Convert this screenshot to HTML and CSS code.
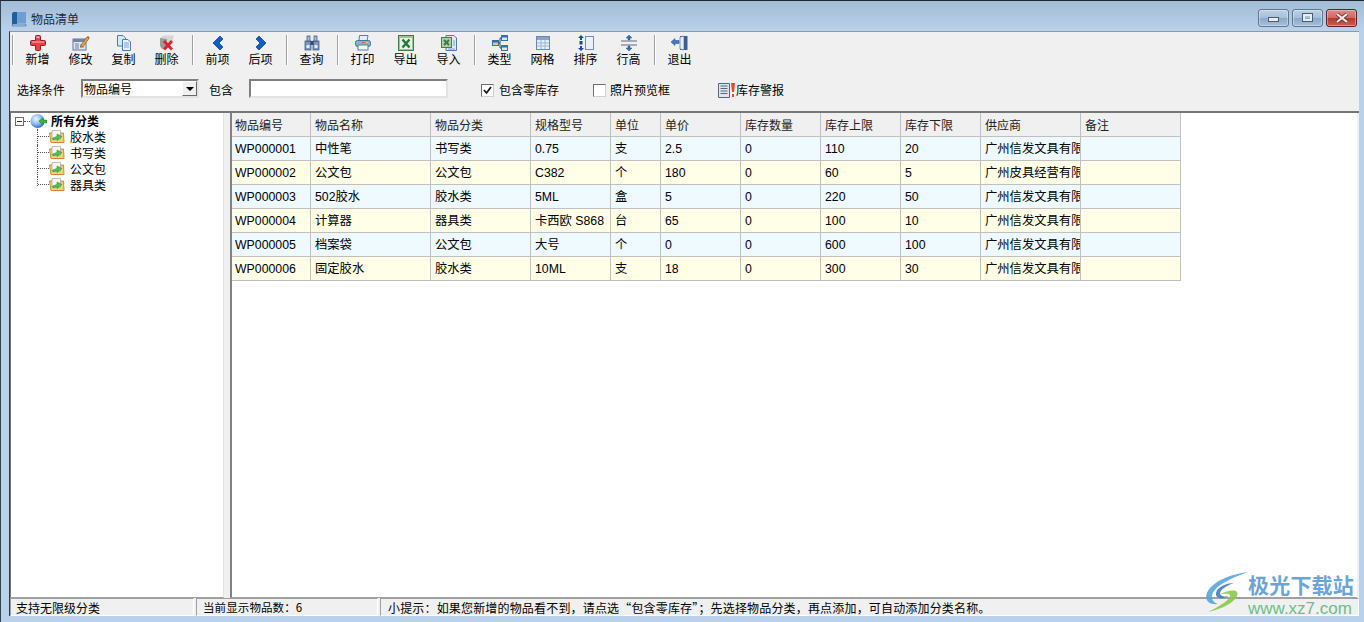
FILE: index.html
```html
<!DOCTYPE html>
<html lang="zh">
<head>
<meta charset="utf-8">
<title>物品清单</title>
<link rel="stylesheet" href="styles.css">
</head>
<body>
<div class="window">
  <header class="titlebar">
    <svg class="title-icon" width="16" height="16" viewBox="0 0 16 16"><path d="M1 3 Q1 1 3 1 H6 V13 H3 Q1 13 1 15 Z" fill="#1c5fa8"/><path d="M6 1 H15 V12 H6 Z" fill="#6f9fd0"/><path d="M1 15 Q1 13 3 13 H15 V15 H3Z" fill="#a9c4e0" stroke="#2b5e96" stroke-width=".5"/></svg>
    <span class="title-text">物品清单</span>
    <div class="win-buttons">
      <div class="win-btn"><span class="glyph-min"></span></div>
      <div class="win-btn"><span class="glyph-max"></span></div>
      <div class="win-btn win-close"><svg width="14" height="10" viewBox="0 0 14 10"><path d="M2 1 L12 9 M12 1 L2 9" stroke="#6e2a26" stroke-width="3.6"/><path d="M2 1 L12 9 M12 1 L2 9" stroke="#eeeeee" stroke-width="2.2"/></svg></div>
    </div>
  </header>

  <div class="client">
    <nav class="toolbar">
      <i class="sep"></i>
      <button class="tool"><svg width="16" height="16" viewBox="0 0 16 16"><path d="M5.5 1.5 Q5.5 .5 6.5 .5 H9.5 Q10.5 .5 10.5 1.5 V5.5 H14.5 Q15.5 5.5 15.5 6.5 V9.5 Q15.5 10.5 14.5 10.5 H10.5 V14.5 Q10.5 15.5 9.5 15.5 H6.5 Q5.5 15.5 5.5 14.5 V10.5 H1.5 Q.5 10.5 .5 9.5 V6.5 Q.5 5.5 1.5 5.5 H5.5 Z" fill="#e8414a" stroke="#8f2228"/><path d="M6.5 1.5 H9.5 V3 H6.5 Z M2 6.5 H14 V7.5 H2Z" fill="#f9b6b6"/></svg><span>新增</span></button>
      <button class="tool"><svg width="18" height="16" viewBox="0 0 18 16"><rect x="1" y="4" width="13" height="11" fill="#dfe8f2" stroke="#64748c"/><rect x="1" y="4" width="13" height="3" fill="#6d87ab"/><path d="M3 9 H7 M3 11 H7 M3 13 H7" stroke="#6b7c94"/><rect x="8" y="9" width="4" height="4" fill="#a5b9d1"/><path d="M9 10 L15 2 L17 3.5 L11 11.5 L8.5 12 Z" fill="#e9a53a" stroke="#7b5a22" stroke-width=".7"/><path d="M15 2 L17 3.5 L17.6 2.5 L16 1Z" fill="#c7413a"/></svg><span>修改</span></button>
      <button class="tool"><svg width="16" height="16" viewBox="0 0 16 16"><path d="M1.5 .5 H7 L9.5 3 V11 H1.5 Z" fill="#d9e6f6" stroke="#4f78ae"/><path d="M6.5 4.5 H12 L14.5 7 V15.5 H6.5 Z" fill="#eef4fc" stroke="#4f78ae"/><path d="M8 8 H13 M8 10 H13 M8 12 H13" stroke="#7da0cc"/></svg><span>复制</span></button>
      <button class="tool"><svg width="16" height="16" viewBox="0 0 16 16"><path d="M2 2 L5 .5 H15 L13 9 H3 Z" fill="#d6d6d6"/><path d="M1 3 V11 L3 14 H8 V4 Z" fill="#9b9b9b"/><path d="M5 6 L13 14.5 M13 6 L5 14.5" stroke="#d8232a" stroke-width="2.8"/></svg><span>删除</span></button>
      <i class="sep"></i>
      <button class="tool"><svg width="12" height="16" viewBox="0 0 12 16"><path d="M1 8 L8 1 L11 4 L7 8 L11 12 L8 15 Z" fill="#0b5fcb" stroke="#07397c" stroke-width=".7"/></svg><span>前项</span></button>
      <button class="tool"><svg width="12" height="16" viewBox="0 0 12 16"><path d="M11 8 L4 1 L1 4 L5 8 L1 12 L4 15 Z" fill="#0b5fcb" stroke="#07397c" stroke-width=".7"/></svg><span>后项</span></button>
      <i class="sep"></i>
      <button class="tool"><svg width="16" height="16" viewBox="0 0 16 16"><rect x="1" y="6" width="6" height="9" fill="#7b98c4" stroke="#2f4a75" stroke-width=".7"/><rect x="9" y="6" width="6" height="9" fill="#7b98c4" stroke="#2f4a75" stroke-width=".7"/><rect x="3" y="1" width="3" height="5" fill="#a5bcdc" stroke="#2f4a75" stroke-width=".7"/><rect x="10" y="1" width="3" height="5" fill="#a5bcdc" stroke="#2f4a75" stroke-width=".7"/><rect x="6.5" y="6" width="3" height="4" fill="#2f4a75"/><path d="M2.5 10 H5.5 V13 H2.5Z M10.5 10 H13.5 V13 H10.5Z" fill="#e2ebf6"/></svg><span>查询</span></button>
      <i class="sep"></i>
      <button class="tool"><svg width="16" height="16" viewBox="0 0 16 16"><path d="M4.5 .5 H13 L12 6 H4 Z" fill="#e9eef5" stroke="#5d7b9f"/><rect x=".5" y="5.5" width="15" height="6" rx="2" fill="#8fb0d2" stroke="#4d6f98"/><rect x="3" y="10" width="10" height="5" fill="#f2f5f9" stroke="#5d7b9f"/><rect x="7" y="7" width="3" height="1" fill="#e25050"/><rect x="11" y="7" width="2" height="1" fill="#e8c040"/></svg><span>打印</span></button>
      <button class="tool"><svg width="16" height="16" viewBox="0 0 16 16"><rect x=".5" y=".5" width="15" height="15" fill="#9fc49a" stroke="#3f7a42"/><rect x="2" y="3" width="12" height="11" fill="#e9f3e2"/><path d="M4.5 4.5 L11.5 12.5 M11.5 4.5 L4.5 12.5" stroke="#1f7a3a" stroke-width="2.4"/></svg><span>导出</span></button>
      <button class="tool"><svg width="16" height="16" viewBox="0 0 16 16"><path d="M5 .5 H13 L15.5 3 V15.5 H5 Z" fill="#dfe9f6" stroke="#4f78ae"/><rect x=".5" y="2.5" width="10" height="10" fill="#b7c9ab" stroke="#4a7a4a"/><path d="M3 5 L8 10 M8 5 L3 10" stroke="#2e7d3e" stroke-width="1.8"/><path d="M12 6 H14 M12 8 H14 M12 10 H14 M7 14 H14" stroke="#7da0cc"/></svg><span>导入</span></button>
      <i class="sep"></i>
      <button class="tool"><svg width="16" height="16" viewBox="0 0 16 16"><rect x="9.5" y=".5" width="6" height="5" fill="#dbe8f8" stroke="#3f6ea8"/><rect x=".5" y="5.5" width="6" height="5" fill="#e8c67a" stroke="#3f6ea8"/><rect x="9.5" y="10.5" width="6" height="5" fill="#dbe8f8" stroke="#3f6ea8"/><path d="M6.5 8 H8 V3 H9.5 M8 8 V13 H9.5" fill="none" stroke="#1b4f91"/><rect x=".5" y="5.5" width="6" height="2" fill="#2f6cc0"/><rect x="9.5" y=".5" width="6" height="2" fill="#2f6cc0"/><rect x="9.5" y="10.5" width="6" height="2" fill="#2f6cc0"/></svg><span>类型</span></button>
      <button class="tool"><svg width="14" height="14" viewBox="0 0 14 14"><rect x=".5" y=".5" width="13" height="13" fill="#e7eef8" stroke="#6b86ad"/><rect x="1" y="1" width="12" height="3" fill="#8aa3c8"/><path d="M1 7 H13 M1 10 H13 M5 4 V13 M9 4 V13" stroke="#9db4d4"/></svg><span>网格</span></button>
      <button class="tool"><svg width="16" height="16" viewBox="0 0 16 16"><rect x="7.5" y="1.5" width="8" height="13" fill="#eaf1fb" stroke="#6b8ebc"/><path d="M3 0 L6 3 L4 3 V5 H2 V3 L0 3 Z M2 11 H4 V13 H6 L3 16 L0 13 H2 Z" fill="#0e4f9f"/><rect x="1.5" y="6" width="3" height="3.5" fill="#0e4f9f"/></svg><span>排序</span></button>
      <button class="tool"><svg width="18" height="16" viewBox="0 0 18 16"><path d="M1 6 H17 M1 10 H17" stroke="#5d6b80" stroke-width="1.2"/><path d="M9 0 L12 3 H10 V5 H8 V3 H6 Z M8 11 H10 V13 H12 L9 16 L6 13 H8 Z" fill="#2f6fbf" stroke="#1a4480" stroke-width=".4"/></svg><span>行高</span></button>
      <i class="sep"></i>
      <button class="tool"><svg width="17" height="16" viewBox="0 0 17 16"><path d="M9 1 H16.5 V15 H9 Z" fill="#3c5f8f"/><path d="M9 2 L13 1 V15 L9 14 Z" fill="#e6eef8" stroke="#3c5f8f" stroke-width=".6"/><path d="M0 7 L4 3.5 V5.5 H8 V8.5 H4 V10.5 Z" fill="#3d7cc7" stroke="#234a80" stroke-width=".5"/></svg><span>退出</span></button>
    </nav>

    <form class="filters">
      <label class="f-label">选择条件</label>
      <div class="select"><span>物品编号</span><b class="select-btn"><i></i></b></div>
      <label class="f-label f-contains">包含</label>
      <div class="text-input"></div>
      <label class="check check-a"><span class="box"><svg width="11" height="11" viewBox="0 0 11 11"><path d="M2 5 L4.5 8 L9 2" fill="none" stroke="#111" stroke-width="1.7"/></svg></span>包含零库存</label>
      <label class="check check-b"><span class="box"></span>照片预览框</label>
      <a class="alarm"><svg width="18" height="16" viewBox="0 0 18 16"><path d="M.5 1.5 H11.5 V15.5 H.5 Z" fill="#dfe6f0" stroke="#56657c"/><path d="M2.5 4 H9.5 M2.5 6.5 H9.5 M2.5 9 H9.5 M2.5 11.5 H9.5" stroke="#56657c"/><path d="M13 1 H17 L16 10 H14 Z" fill="#e8472a"/><rect x="14" y="12" width="2" height="3" fill="#e8472a"/></svg>库存警报</a>
    </form>

    <main class="panes">
      <aside class="tree">
        <div class="tree-root">
          <span class="expander"></span><i class="dots-h"></i>
          <svg class="globe" width="17" height="16" viewBox="0 0 17 16"><defs><radialGradient id="g" cx=".4" cy=".35" r=".7"><stop offset="0" stop-color="#f2f8ff"/><stop offset=".6" stop-color="#7db2ec"/><stop offset="1" stop-color="#1f5fb8"/></radialGradient></defs><circle cx="7.5" cy="8" r="7" fill="url(#g)"/><path d="M9 8 L13 5 V7 H17 V10 H13 V12 Z" fill="#3fae3c" stroke="#1f7a22" stroke-width=".5"/></svg>
          <strong>所有分类</strong>
        </div>
        <ul class="tree-list">
          <li><i class="conn"><i></i></i><svg width="16" height="14" viewBox="0 0 16 14"><path d="M.5 3 H14.5 L15 12.5 H2 Z" fill="#f2cf7e" stroke="#c98f2b"/><path d="M3 .5 H11.5 V9 H3 Z" fill="#f6f6f6" stroke="#9a9a9a" stroke-width=".6"/><path d="M3.5 8 L8 6.5 V4 L13 6.5 L8 10.5 V8.5 L4 10 Z" fill="#5cc04a" stroke="#2b7f24" stroke-width=".5"/></svg><span>胶水类</span></li>
          <li><i class="conn"><i></i></i><svg width="16" height="14" viewBox="0 0 16 14"><path d="M.5 3 H14.5 L15 12.5 H2 Z" fill="#f2cf7e" stroke="#c98f2b"/><path d="M3 .5 H11.5 V9 H3 Z" fill="#f6f6f6" stroke="#9a9a9a" stroke-width=".6"/><path d="M3.5 8 L8 6.5 V4 L13 6.5 L8 10.5 V8.5 L4 10 Z" fill="#5cc04a" stroke="#2b7f24" stroke-width=".5"/></svg><span>书写类</span></li>
          <li><i class="conn"><i></i></i><svg width="16" height="14" viewBox="0 0 16 14"><path d="M.5 3 H14.5 L15 12.5 H2 Z" fill="#f2cf7e" stroke="#c98f2b"/><path d="M3 .5 H11.5 V9 H3 Z" fill="#f6f6f6" stroke="#9a9a9a" stroke-width=".6"/><path d="M3.5 8 L8 6.5 V4 L13 6.5 L8 10.5 V8.5 L4 10 Z" fill="#5cc04a" stroke="#2b7f24" stroke-width=".5"/></svg><span>公文包</span></li>
          <li class="last"><i class="conn"><i></i></i><svg width="16" height="14" viewBox="0 0 16 14"><path d="M.5 3 H14.5 L15 12.5 H2 Z" fill="#f2cf7e" stroke="#c98f2b"/><path d="M3 .5 H11.5 V9 H3 Z" fill="#f6f6f6" stroke="#9a9a9a" stroke-width=".6"/><path d="M3.5 8 L8 6.5 V4 L13 6.5 L8 10.5 V8.5 L4 10 Z" fill="#5cc04a" stroke="#2b7f24" stroke-width=".5"/></svg><span>器具类</span></li>
        </ul>
      </aside>
      <section class="grid">
        <table>
          <colgroup><col class="c79"><col class="c120"><col class="c100"><col class="c80"><col class="c50"><col class="c80"><col class="c80"><col class="c80"><col class="c80"><col class="c100"><col class="c100"></colgroup>
          <thead><tr><th>物品编号</th><th>物品名称</th><th>物品分类</th><th>规格型号</th><th>单位</th><th>单价</th><th>库存数量</th><th>库存上限</th><th>库存下限</th><th>供应商</th><th>备注</th></tr></thead>
          <tbody>
            <tr><td>WP000001</td><td>中性笔</td><td>书写类</td><td>0.75</td><td>支</td><td>2.5</td><td>0</td><td>110</td><td>20</td><td>广州信发文具有限公司</td><td></td></tr>
            <tr><td>WP000002</td><td>公文包</td><td>公文包</td><td>C382</td><td>个</td><td>180</td><td>0</td><td>60</td><td>5</td><td>广州皮具经营有限公司</td><td></td></tr>
            <tr><td>WP000003</td><td>502胶水</td><td>胶水类</td><td>5ML</td><td>盒</td><td>5</td><td>0</td><td>220</td><td>50</td><td>广州信发文具有限公司</td><td></td></tr>
            <tr><td>WP000004</td><td>计算器</td><td>器具类</td><td>卡西欧 S868</td><td>台</td><td>65</td><td>0</td><td>100</td><td>10</td><td>广州信发文具有限公司</td><td></td></tr>
            <tr><td>WP000005</td><td>档案袋</td><td>公文包</td><td>大号</td><td>个</td><td>0</td><td>0</td><td>600</td><td>100</td><td>广州信发文具有限公司</td><td></td></tr>
            <tr><td>WP000006</td><td>固定胶水</td><td>胶水类</td><td>10ML</td><td>支</td><td>18</td><td>0</td><td>300</td><td>30</td><td>广州信发文具有限公司</td><td></td></tr>
          </tbody>
        </table>
      </section>
    </main>

    <footer class="status">
      <div class="panel p1">支持无限级分类</div>
      <div class="panel p2">当前显示物品数：6</div>
      <div class="panel p3">小提示：如果您新增的物品看不到，请点选“包含零库存”；先选择物品分类，再点添加，可自动添加分类名称。</div>
    </footer>
  </div>

  <div class="watermark">
    <svg width="46" height="42" viewBox="0 0 46 42"><path d="M44 1 C28 3 8 10 3 22 C0 30 6 34 14 33 C8 31 6 26 10 20 C16 12 30 6 44 1Z" fill="#5aa5dc"/><path d="M30 12 C20 12 11 18 12 24 C13 28 20 28 24 25 C20 26 16 25 16 22 C17 18 24 14 30 12Z" fill="#3f7fc0"/><path d="M14 24 C22 20 30 18 33 21 C36 26 26 36 4 41 C18 34 27 28 26 24 C24 22 18 23 14 24Z" fill="#8cc84b"/></svg>
    <div class="wm-text"><b>极光下载站</b><span>www.xz7.com</span></div>
  </div>
</div>
</body>
</html>
```

FILE: styles.css
```css
* { box-sizing: border-box; }
html, body { margin: 0; height: 100%; overflow: hidden; }
body {
  font: 12px/16px "Noto Sans CJK SC", "Liberation Sans", sans-serif;
  color: #000;
  background: #b9d1ea;
}
.window {
  height: 622px;
  display: flex;
  flex-direction: column;
  padding: 0 5px 6px 8px;
  border-top: 1px solid #1e2630;
  border-left: 1px solid #39434f;
  background: #b9d1ea;
  position: relative;
}
.titlebar {
  height: 30px;
  margin: 0 -5px 0 -8px;
  padding: 6px 7px 0 10px;
  display: flex;
  align-items: center;
  background: linear-gradient(#a3bcd7, #b9d1ea);
}
.title-icon { margin-right: 4px; }
.title-text { color: #1d2a38; }
.win-buttons { margin: -3px 0 0 auto; display: flex; gap: 3px; }
.win-btn {
  width: 31px;
  height: 18px;
  border: 1px solid #5f7690;
  border-radius: 3px;
  display: flex;
  align-items: center;
  justify-content: center;
  background: linear-gradient(#bcd0e6 0, #a6bfd9 48%, #8ba9c8 52%, #a5c0dc 100%);
  box-shadow: inset 0 0 0 1px rgba(255,255,255,.35);
}
.win-close {
  border-color: #5a2127;
  background: linear-gradient(#dc8a84 0, #cf6b60 48%, #b53a2a 52%, #c76050 100%);
}
.glyph-min { width: 11px; height: 5px; margin-top: 3px; background: #e8edf2; border: 1px solid #4c5b6c; }
.glyph-max { width: 11px; height: 9px; border: 3px solid #e8edf2; outline: 1px solid #4c5b6c; outline-offset: -1px; }

.client {
  flex: 1;
  min-height: 0;
  display: flex;
  flex-direction: column;
  background: #f0f0f0;
  border-top: 1px solid #8a9aa8;
  border-left: 1px solid #2d3a48;
}
.toolbar {
  height: 40px;
  padding: 3px 0 0;
  display: flex;
  align-items: flex-start;
}
.sep {
  flex: none;
  width: 2px;
  height: 30px;
  margin: 0 2px 0 4px;
  background: linear-gradient(90deg, #a0a0a0 50%, #fff 50%);
}
.sep:first-child { margin-left: 2px; }
.tool {
  flex: none;
  width: 43px;
  height: 31px;
  padding: 0;
  border: 0;
  background: none;
  font: inherit;
  color: #000;
  display: flex;
  flex-direction: column;
  align-items: center;
  justify-content: flex-end;
}
.tool svg { flex: none; margin-bottom: auto; margin-top: 1px; }
.tool span { line-height: 15px; }

.filters {
  height: 41px;
  padding: 7px 0 0 7px;
  display: flex;
  align-items: flex-start;
  border-bottom: 2px solid #767676;
}
.f-label { margin-top: 3px; }
.select {
  width: 118px;
  height: 19px;
  margin-left: 16px;
  padding-left: 1px;
  background: #fff;
  border: 2px solid;
  border-color: #7f7f7f #e3e3e3 #e3e3e3 #7f7f7f;
  display: flex;
  justify-content: space-between;
  line-height: 15px;
}
.select-btn {
  width: 15px;
  background: #f0f0f0;
  border: 1px solid;
  border-color: #fff #696969 #696969 #fff;
  display: flex;
  align-items: center;
  justify-content: center;
}
.select-btn i { border: 4px solid transparent; border-top: 4px solid #000; border-bottom: 0; }
.f-contains { margin-left: 10px; }
.text-input {
  width: 199px;
  height: 19px;
  margin-left: 16px;
  background: #fff;
  border: 2px solid;
  border-color: #7f7f7f #e3e3e3 #e3e3e3 #7f7f7f;
}
.check { display: flex; align-items: center; margin-top: 3px; }
.check-a { margin-left: 33px; gap: 5px; }
.check-b { margin-left: 34px; gap: 4px; }
.box {
  width: 13px;
  height: 13px;
  background: #fff;
  border: 1px solid;
  border-color: #707070 #d0d0d0 #d0d0d0 #707070;
  display: flex;
  align-items: center;
  justify-content: center;
}
.alarm { display: flex; align-items: center; margin: 3px 0 0 48px; }

.panes { flex: 1; min-height: 0; display: flex; padding-right: 2px; }
.tree {
  width: 214px;
  background: #fff;
  border-left: 1px solid #767676;
  border-right: 1px solid #e3e3e3;
  border-bottom: 1px solid #a0a0a0;
  padding: 0 0 0 4px;
}
.tree-root { height: 16px; display: flex; align-items: center; }
.expander {
  width: 9px;
  height: 9px;
  border: 1px solid #6d6d6d;
  background: linear-gradient(#333, #333) center / 5px 1px no-repeat;
}
.dots-h { width: 6px; border-top: 1px dotted #555; }
.globe { margin-right: 4px; }
.tree-root strong { font-weight: 700; }
.tree-list { list-style: none; margin: 0 0 0 22px; padding: 0; }
.tree-list li { height: 16px; display: flex; align-items: center; }
.tree-list li svg { margin-right: 5px; flex: none; }
.conn { width: 12px; height: 16px; border-left: 1px dotted #555; align-self: flex-start; }
.conn i { display: block; height: 8px; border-bottom: 1px dotted #555; }
.last .conn { height: 9px; }

.grid {
  flex: 1;
  margin-left: 6px;
  background: #fff;
  border-left: 2px solid #808080;
  border-bottom: 1px solid #a0a0a0;
  min-width: 0;
}
table { border-collapse: separate; border-spacing: 0; table-layout: fixed; width: 949px; }
.c50 { width: 50px; } .c79 { width: 79px; } .c80 { width: 80px; } .c100 { width: 100px; } .c120 { width: 120px; }
th, td {
  height: 24px;
  padding: 0 0 0 4px;
  border-right: 1px solid #c0c0c0;
  border-bottom: 1px solid #c0c0c0;
  font-weight: 400;
  text-align: left;
  white-space: nowrap;
  overflow: hidden;
  color: #000;
}
th { background: #f0f0f0; color: #222; }
th:first-child, td:first-child { padding-left: 3px; }
tbody tr:nth-child(odd) td { background: #eefaff; }
tbody tr:nth-child(even) td { background: #ffffe8; }
td { font-family: "Liberation Sans", "Noto Sans CJK SC", sans-serif; font-size: 12.3px; }

.status { height: 18px; display: flex; gap: 2px; flex: none; }
.panel {
  border: 1px solid;
  border-color: #a0a0a0 #fff #fff #a0a0a0;
  padding-left: 5px;
  line-height: 17px;
  white-space: nowrap;
}
.p1 { width: 184px; }
.p2 { width: 182px; padding-left: 6px; font-size: 11.5px; letter-spacing: .1px; }
.p3 { flex: 1; min-width: 0; overflow: hidden; padding-left: 7px; letter-spacing: .17px; }

.watermark {
  position: absolute;
  left: 1203px;
  top: 570px;
  display: flex;
  opacity: .9;
}
.wm-text { display: flex; flex-direction: column; margin-left: -2px; }
.wm-text b { font-size: 21px; line-height: 27px; color: #5a9bd4; font-weight: 700; letter-spacing: .2px; }
.wm-text span { font: 17px/20px "Liberation Sans", sans-serif; color: #5db982; margin-top: 1px; }
```
